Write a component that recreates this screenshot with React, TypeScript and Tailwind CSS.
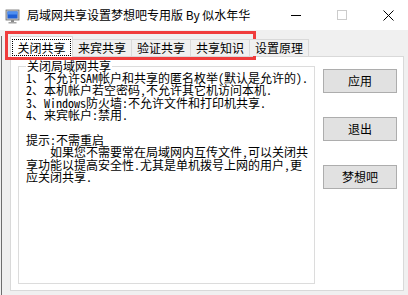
import React from "react";

const tabs = ["关闭共享", "来宾共享", "验证共享", "共享知识", "设置原理"];

const lines = [
  "1、不允许SAM帐户和共享的匿名枚举(默认是允许的).",
  "2、本机帐户若空密码,不允许其它机访问本机.",
  "3、Windows防火墙:不允许文件和打印机共享.",
  "4、来宾帐户:禁用.",
  " ",
  "提示:不需重启",
  "    如果您不需要常在局域网内互传文件,可以关闭共",
  "享功能以提高安全性.尤其是单机拨号上网的用户,更",
  "应关闭共享.",
];

function AppIcon() {
  return (
    <svg width="16" height="16" viewBox="0 0 16 16">
      <rect x="1" y="2" width="13" height="10" fill="#c9c9c9" stroke="#6b6b6b" strokeWidth="0.8" />
      <rect x="2.5" y="3.5" width="10" height="7" fill="#1e5fd6" />
      <rect x="2.5" y="3.5" width="10" height="3" fill="#4f8ff0" />
      <rect x="6" y="12" width="3" height="2" fill="#8a8a8a" />
      <rect x="3.5" y="14" width="8" height="1.5" fill="#a5a5a5" />
    </svg>
  );
}

function CaptionButtons() {
  return (
    <div className="ml-auto -mr-[3px] flex h-full">
      <div className="w-[46px] flex items-center justify-center">
        <div className="w-[10px] h-px bg-black" />
      </div>
      <div className="w-[46px] flex items-center justify-center">
        <div className="w-[10px] h-[10px] border border-[#cccccc]" />
      </div>
      <div className="w-[46px] flex items-center justify-center">
        <svg width="11" height="11" viewBox="0 0 11 11">
          <path d="M0.5 0.5L10.5 10.5M10.5 0.5L0.5 10.5" stroke="#000" strokeWidth="1" />
        </svg>
      </div>
    </div>
  );
}

export default function App() {
  const cjk = "font-['Noto_Sans_Mono_CJK_SC','Noto_Sans_CJK_SC',sans-serif]";
  return (
    <div className="relative w-[408px] h-[295px] bg-[#f0f0f0] overflow-hidden text-black">
      {/* title bar */}
      <div className="h-[30px] bg-white flex items-center font-['Noto_Sans_CJK_SC',sans-serif] text-[12px]">
        <div className="ml-[5px] mt-[1px] flex">
          <AppIcon />
        </div>
        <span className="ml-[6px] leading-none">局域网共享设置梦想吧专用版 By 似水年华</span>
        <CaptionButtons />
      </div>

      {/* body */}
      <div className={`ml-[1px] h-[265px] border-l border-[#6e6e6e] pl-[8px] ${cjk} text-[12px]`}>
        {/* tab strip */}
        <div className="relative z-10 mt-[6px] h-[21px] flex items-end">
          <div className="h-[21px] w-[63px] bg-white border-t border-l border-r border-[#d9d9d9] flex items-start justify-center pt-[2px]">
            <div className="w-[59px] h-[17px] border border-dotted border-black flex items-center justify-center leading-none">
              {tabs[0]}
            </div>
          </div>
          {tabs.slice(1).map((t) => (
            <div
              key={t}
              className="-ml-px mb-px h-[17px] w-[60px] bg-[#f0f0f0] border-t border-l border-r border-[#d9d9d9] flex items-center justify-center leading-none"
            >
              {t}
            </div>
          ))}
        </div>

        {/* tab panel */}
        <div className="-mt-px w-[394px] h-[235px] bg-white border border-[#d9d9d9] pl-[7px] pt-[3px] flex items-start">
          <fieldset className="w-[297px] h-[224px] border border-[#dcdcdc] pl-[7px] pr-[4px] m-0 min-w-0">
            <legend className="px-px leading-[12px]">关闭局域网共享</legend>
            <div className="leading-[12.4px]">
              {lines.map((l, i) => (
                <div key={i} className="whitespace-pre h-[12.4px]">
                  {l}
                </div>
              ))}
            </div>
          </fieldset>

          <div className="ml-[8px] mt-[9px] flex flex-col gap-[24px]">
            {["应用", "退出", "梦想吧"].map((b) => (
              <button
                key={b}
                className="w-[74px] h-[24px] bg-[#e1e1e1] border border-[#adadad] flex items-center justify-center leading-none text-[12px]"
              >
                {b}
              </button>
            ))}
          </div>
        </div>
      </div>

      {/* red annotation box */}
      <div className="absolute left-[5px] top-[31px] w-[251px] h-[29px] border-[3px] border-[#f03c3c] pointer-events-none" />
    </div>
  );
}
